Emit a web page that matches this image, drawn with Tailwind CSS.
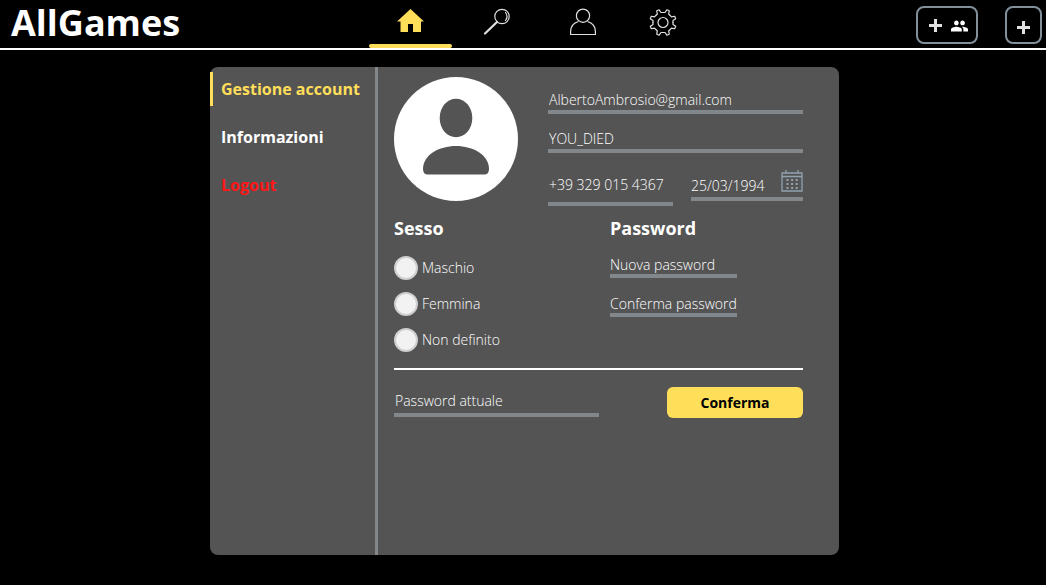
<!DOCTYPE html>
<html lang="it">
<head>
<meta charset="utf-8">
<meta name="viewport" content="width=device-width, initial-scale=1">
<title>AllGames</title>
<script src="https://cdn.jsdelivr.net/npm/@tailwindcss/browser@4"></script>
</head>
<body class="flex min-h-screen flex-col bg-black font-['Open_Sans',sans-serif] text-sm font-light text-white">
<header class="grid h-[50px] shrink-0 grid-cols-[1fr_auto_1fr] border-b-2 border-white">
  <a href="#" class="pl-[11px] text-[36px] leading-[46px] font-bold">AllGames</a>
  <nav class="flex gap-[3px] pl-[22px] text-[#e0e0e0]" aria-label="Principale">
    <a href="#" aria-label="Home" class="flex w-[83px] flex-col items-center justify-between pt-[9px] text-[#ffde59]">
      <svg class="h-[23px] w-[27px]" viewBox="0 0 27 23" fill="currentColor"><path d="M13.500 0 27 12.500H24V23H16V15H11V23H3.500V12.500H0Z"/></svg>
      <span class="h-1 w-full rounded-sm bg-[#ffde59]"></span>
    </a>
    <a href="#" aria-label="Cerca" class="flex w-[83px] justify-center pt-2">
      <svg class="h-[28px] w-[28px]" viewBox="0 0 28 28" fill="none" stroke="currentColor" stroke-linecap="round"><circle cx="19" cy="8.500" r="7.200" stroke-width="1.200"/><path d="M22.500 4.500q3 4 0 8" stroke-width="1.200"/><path d="M14 14 2 25.500" stroke-width="2.200"/></svg>
    </a>
    <a href="#" aria-label="Profilo" class="flex w-[83px] justify-center pt-2">
      <svg class="h-[28px] w-[28px]" viewBox="0 0 28 28" fill="none" stroke="currentColor" stroke-width="1.200" stroke-linejoin="round"><circle cx="14" cy="7.700" r="6.600"/><path d="M9.500 13.500C4.500 15 1.600 18.500 1.600 23.500V26.500H26.400V23.500C26.400 18.500 23.500 15 18.500 13.500"/></svg>
    </a>
    <a href="#" aria-label="Impostazioni" class="flex w-[72px] justify-center pt-2">
      <svg class="h-[28px] w-[28px]" viewBox="-14 -14.500 28 28" fill="none" stroke="currentColor" stroke-width="1.200" stroke-linecap="round" stroke-linejoin="round">
        <circle r="5"/>
        <defs><path id="tooth" d="M-3.830-9.240-1.980-10-1.300-13.200H1.300L1.980-10 3.830-9.240"/></defs>
        <use href="#tooth" transform="rotate(22.500)"/><use href="#tooth" transform="rotate(67.500)"/><use href="#tooth" transform="rotate(112.500)"/><use href="#tooth" transform="rotate(157.500)"/><use href="#tooth" transform="rotate(202.500)"/><use href="#tooth" transform="rotate(247.500)"/><use href="#tooth" transform="rotate(292.500)"/><use href="#tooth" transform="rotate(337.500)"/>
      </svg>
    </a>
  </nav>
  <div class="flex justify-end gap-[27px] pt-[6px] pr-1 text-[#e0e0e0]">
    <button type="button" aria-label="Aggiungi amici" class="flex h-[38px] w-[62px] items-center justify-center gap-[9px] rounded-lg border-2 border-[#82909c] pl-0.5">
      <svg class="h-[13px] w-[13px]" viewBox="0 0 13 13" stroke="currentColor" stroke-width="3"><path d="M6.500 0V13M0 6.500H13"/></svg>
      <svg class="mt-px h-[12px] w-[17px] text-white" viewBox="1 5 22 14" fill="currentColor"><path d="M16 11c1.660 0 2.990-1.340 2.990-3S17.660 5 16 5c-1.660 0-3 1.340-3 3s1.340 3 3 3zm-8 0c1.660 0 2.990-1.340 2.990-3S9.660 5 8 5C6.340 5 5 6.340 5 8s1.340 3 3 3zm0 2c-2.330 0-7 1.170-7 3.500V19h14v-2.500c0-2.330-4.670-3.500-7-3.500zm8 0c-.29 0-.62.020-.97.050 1.160.84 1.970 1.970 1.970 3.450V19h6v-2.500c0-2.330-4.670-3.500-7-3.500z"/></svg>
    </button>
    <button type="button" aria-label="Aggiungi" class="flex h-[38px] w-[37px] items-center justify-center rounded-lg border-2 border-[#82909c] pt-[4px]">
      <svg class="h-[13px] w-[13px]" viewBox="0 0 13 13" stroke="currentColor" stroke-width="3"><path d="M6.500 0V13M0 6.500H13"/></svg>
    </button>
  </div>
</header>

<main class="flex flex-1 justify-center pt-[17px] pb-[30px] pl-[3px]">
  <div class="flex w-full max-w-[629px] rounded-lg bg-[#545454]">
    <nav class="flex w-[168px] shrink-0 flex-col gap-[14px] border-r-3 border-[#82878b] pt-[5px] text-base leading-[34px] font-bold" aria-label="Account">
      <a href="#" aria-current="page" class="border-l-3 border-[#ffde59] pl-2 text-[#ffde59]">Gestione account</a>
      <a href="#" class="pl-[11px]">Informazioni</a>
      <a href="#" class="pl-[11px] text-[#ff1616]">Logout</a>
    </nav>

    <form class="min-w-0 flex-1 pt-[10px] pr-9 pl-4">
      <div class="flex gap-[30px]">
        <svg class="h-[124px] w-[124px] shrink-0" viewBox="0 0 124 124" role="img" aria-label="Foto profilo"><circle cx="62" cy="62" r="62" fill="#fff"/><g fill="#545454"><ellipse cx="62" cy="41" rx="16.300" ry="19.300"/><path d="M29 92C29 78 45 69 62 69S95 78 95 92Q95 97.500 90 97.500H34Q29 97.500 29 92Z"/></g></svg>
        <div class="min-w-0 flex-1 pt-[9px]">
          <input type="email" aria-label="Email" value="AlbertoAmbrosio@gmail.com" class="block h-7 w-full border-b-4 border-[#82878b] pt-0.5 pl-px outline-none">
          <input type="text" aria-label="Nome utente" value="YOU_DIED" class="mt-[11px] block h-7 w-full border-b-4 border-[#82878b] pt-0.5 pl-px outline-none">
          <div class="mt-[17px] flex items-start gap-[18px]">
            <input type="tel" aria-label="Telefono" value="+39 329 015 4367" class="h-9 w-[125px] border-b-4 border-[#82878b] pt-[3px] pb-[7px] pl-px outline-none">
            <div class="flex h-[31px] min-w-0 flex-1 border-b-4 border-[#82878b]">
              <input type="text" aria-label="Data di nascita" value="25/03/1994" class="w-full min-w-0 flex-1 pt-[5px] outline-none">
              <button type="button" aria-label="Apri calendario" class="h-[22px] w-[22px] text-[#8fa3b0]">
                <svg class="h-[22px] w-[22px]" viewBox="0 0 22 22" fill="none" stroke="currentColor" stroke-width="1.300"><path d="M1 3H21V21H1ZM1 6.500H21M5 0V3M17 0V3"/><path d="M5.500 10H17M5.500 14H17M5.500 18H17" stroke-width="2" stroke-dasharray="2 2.600"/></svg>
              </button>
            </div>
          </div>
        </div>
      </div>

      <div class="grid grid-cols-[216px_1fr] pt-[9px]">
        <fieldset>
          <legend class="text-lg leading-[27px] font-bold">Sesso</legend>
          <div class="flex flex-col gap-3 pt-[14px] leading-6">
            <label class="flex items-center gap-1"><input type="radio" name="sesso" class="h-6 w-6 appearance-none rounded-full border-2 border-[#cfcfcf] bg-[#f2f2f2] checked:bg-[#ffde59]">Maschio</label>
            <label class="flex items-center gap-1"><input type="radio" name="sesso" class="h-6 w-6 appearance-none rounded-full border-2 border-[#cfcfcf] bg-[#f2f2f2] checked:bg-[#ffde59]">Femmina</label>
            <label class="flex items-center gap-1"><input type="radio" name="sesso" class="h-6 w-6 appearance-none rounded-full border-2 border-[#cfcfcf] bg-[#f2f2f2] checked:bg-[#ffde59]">Non definito</label>
          </div>
        </fieldset>
        <fieldset>
          <legend class="text-lg leading-[27px] font-bold">Password</legend>
          <div class="flex flex-col gap-[15px] pt-3">
            <input type="password" aria-label="Nuova password" placeholder="Nuova password" class="h-6 w-[127px] border-b-4 border-[#82878b] outline-none placeholder:text-white">
            <input type="password" aria-label="Conferma password" placeholder="Conferma password" class="h-6 w-[127px] border-b-4 border-[#82878b] outline-none placeholder:text-white">
          </div>
        </fieldset>
      </div>

      <hr class="mt-4 border-t-2 border-white">
      <div class="flex items-start justify-between pt-[17px]">
        <input type="password" aria-label="Password attuale" placeholder="Password attuale" class="h-[30px] w-[205px] border-b-4 border-[#82878b] pt-px pl-px outline-none placeholder:text-white">
        <button type="submit" class="h-[31px] w-[136px] rounded-md bg-[#ffde59] font-bold text-black">Conferma</button>
      </div>
    </form>
  </div>
</main>
</body>
</html>
